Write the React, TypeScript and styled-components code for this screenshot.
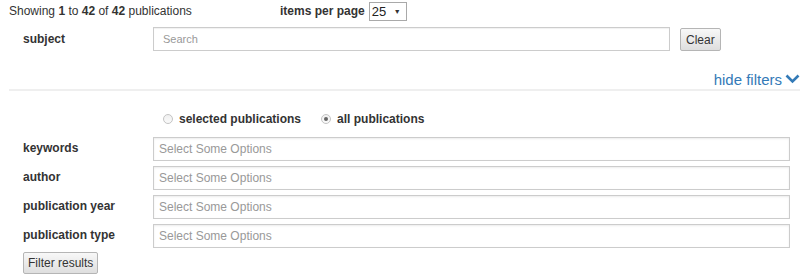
import React from "react";
import styled, { createGlobalStyle } from "styled-components";

const Global = createGlobalStyle`
  html, body { margin: 0; padding: 0; background: #fff; }
  body { font-family: "Liberation Sans", Arial, sans-serif; color: #333; font-size: 12px; }
  * { box-sizing: border-box; }
`;

const Page = styled.div`
  width: 800px;
  padding: 0 0 0 9px;
`;

const TopBar = styled.div`
  display: flex;
  align-items: center;
  height: 22px;
`;

const Showing = styled.div`
  width: 271px;
  font-size: 12px;
  line-height: 22px;
  b { font-weight: bold; }
`;

const PerPage = styled.div`
  display: flex;
  align-items: center;
  gap: 4px;
  font-weight: bold;
  font-size: 12px;
`;

const FakeSelect = styled.div`
  display: flex;
  align-items: center;
  justify-content: space-between;
  width: 38px;
  height: 19px;
  border: 1px solid #a9a9a9;
  padding: 0 5px 0 2px;
  font-weight: normal;
  font-size: 13px;
  color: #222;
  background: #fff;
`;

const Caret = styled.span`
  font-size: 7px;
  color: #333;
`;

const SubjectRow = styled.div`
  display: flex;
  align-items: flex-start;
  margin-top: 5px;
  padding-left: 14px;
`;

const Label = styled.div<{ $top?: number }>`
  width: 130px;
  font-weight: bold;
  font-size: 12px;
  line-height: 14px;
  padding-top: ${(p) => p.$top ?? 3}px;
  color: #333;
`;

const SearchBox = styled.div`
  width: 517px;
  height: 24px;
  border: 1px solid #ccc;
  box-shadow: inset 0 1px 1px rgba(0, 0, 0, 0.06);
  padding-left: 9px;
  font-size: 11px;
  line-height: 22px;
  color: #999;
`;

const Button = styled.button`
  font-family: "Liberation Sans", Arial, sans-serif;
  font-size: 12px;
  color: #333;
  height: 23px;
  padding: 0 5px;
  border: 1px solid #b5b5b5;
  border-radius: 2px;
  background: linear-gradient(#f8f8f8, #dedede);
  cursor: pointer;
`;

const ClearButton = styled(Button)`
  margin-left: 10px;
  margin-top: 1px;
`;

const ToggleRow = styled.div`
  display: flex;
  justify-content: flex-end;
  align-items: center;
  margin-top: 18px;
  height: 20px;
  gap: 3px;
`;

const ToggleLink = styled.a`
  font-size: 15px;
  color: #337ab7;
  text-decoration: none;
`;

const Divider = styled.div`
  height: 2px;
  background: #efefef;
`;

const RadioRow = styled.div`
  display: flex;
  align-items: center;
  gap: 20px;
  padding-left: 154px;
  margin-top: 21px;
  height: 14px;
`;

const RadioItem = styled.label`
  display: flex;
  align-items: center;
  gap: 6px;
  font-weight: bold;
  font-size: 12px;
`;

const RadioDot = styled.span<{ $checked?: boolean }>`
  width: 10px;
  height: 10px;
  border-radius: 50%;
  border: 1px solid #c4c4c4;
  background: linear-gradient(#f0f0f0, #fafafa);
  position: relative;
  &::after {
    content: "";
    display: ${(p) => (p.$checked ? "block" : "none")};
    position: absolute;
    left: 2px;
    top: 2px;
    width: 4px;
    height: 4px;
    border-radius: 50%;
    background: #666;
  }
`;

const FilterList = styled.div`
  display: flex;
  flex-direction: column;
  gap: 5px;
  margin-top: 11px;
  padding-left: 14px;
`;

const FilterRow = styled.div`
  display: flex;
  align-items: flex-start;
`;

const Chosen = styled.div`
  width: 637px;
  height: 24px;
  border: 1px solid #ccc;
  box-shadow: inset 0 1px 2px rgba(0, 0, 0, 0.08);
  background: #fff;
  padding-left: 5px;
  font-size: 12px;
  line-height: 22px;
  color: #999;
`;

const FilterButton = styled(Button)`
  margin-top: 4px;
  margin-left: 14px;
  height: 22px;
  padding: 0 4px;
`;

const filters = ["keywords", "author", "publication year", "publication type"];

export default function App() {
  return (
    <Page>
      <Global />
      <TopBar>
        <Showing>
          Showing <b>1</b> to <b>42</b> of <b>42</b> publications
        </Showing>
        <PerPage>
          items per page
          <FakeSelect>
            25 <Caret>▼</Caret>
          </FakeSelect>
        </PerPage>
      </TopBar>
      <SubjectRow>
        <Label $top={5}>subject</Label>
        <SearchBox>Search</SearchBox>
        <ClearButton>Clear</ClearButton>
      </SubjectRow>
      <ToggleRow>
        <ToggleLink>hide filters</ToggleLink>
        <svg width="15" height="10" viewBox="0 0 15 10">
          <path d="M1.5 1.5 L7.5 7.5 L13.5 1.5" fill="none" stroke="#337ab7" strokeWidth="2.6" />
        </svg>
      </ToggleRow>
      <Divider />
      <RadioRow>
        <RadioItem>
          <RadioDot /> selected publications
        </RadioItem>
        <RadioItem>
          <RadioDot $checked /> all publications
        </RadioItem>
      </RadioRow>
      <FilterList>
        {filters.map((f) => (
          <FilterRow key={f}>
            <Label $top={4}>{f}</Label>
            <Chosen>Select Some Options</Chosen>
          </FilterRow>
        ))}
      </FilterList>
      <FilterButton>Filter results</FilterButton>
    </Page>
  );
}
